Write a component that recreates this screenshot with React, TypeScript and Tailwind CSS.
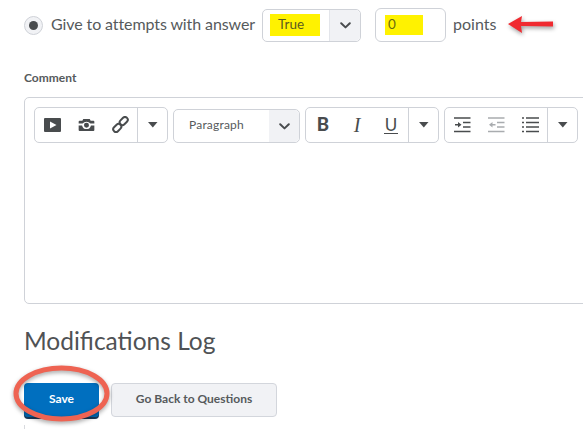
import { ReactNode } from 'react';

function Caret() {
  return (
    <svg width="10" height="6" viewBox="0 0 10 6">
      <path d="M0 0h9.500L4.800 5.500z" fill="#494c4e" />
    </svg>
  );
}

function Chevron() {
  return (
    <svg width="11" height="7" viewBox="0 0 11 7">
      <path d="M1.200 1.200 5.500 5.400 9.800 1.200" fill="none" stroke="#494c4e" strokeWidth="2" strokeLinecap="round" strokeLinejoin="round" />
    </svg>
  );
}

function ToolGroup({ children }: { children: ReactNode }) {
  return (
    <div className="flex h-[36px] w-[134px] shrink-0 items-stretch rounded-[5px] border border-[#cfd2d8] bg-white">
      <div className="grid flex-1 grid-cols-[34px_34px_34px] place-items-center pb-[1px]">{children}</div>
      <div className="flex flex-1 items-center justify-center border-l border-[#cfd2d8]">
        <Caret />
      </div>
    </div>
  );
}

function IndentIcon({ color, dir }: { color: string; dir: 'in' | 'out' }) {
  return (
    <svg width="17" height="16" viewBox="0 0 17 16">
      <path d="M0 1h16.500M9 5.500h7.500M9 10h7.500M0 14.500h16.500" stroke={color} strokeWidth="1.600" />
      {dir === 'in' ? (
        <path d="M1 7h3V5l3.500 2.800L4 10.500V8.500H1z" fill={color} />
      ) : (
        <path d="M7.500 7h-3V5L1 7.800l3.500 2.700V8.500h3z" fill={color} />
      )}
    </svg>
  );
}

export default function App() {
  return (
    <div className="relative h-[429px] w-[583px] overflow-hidden bg-white font-['Lato','Open_Sans',sans-serif] text-[#565a5c]">
      <div className="pl-[24px] pt-[8px]">
        {/* Answer row */}
        <div className="flex h-[34px] items-center">
          <div className="flex h-[19px] w-[19px] shrink-0 items-center justify-center rounded-full border border-[#cfd2d8] bg-[#f1f2f5]">
            <div className="h-[9px] w-[9px] rounded-full bg-[#494c4e]" />
          </div>
          <span className="ml-[8px] w-[211px] shrink-0 whitespace-nowrap pb-[2px] text-[16px] leading-none tracking-[-0.1px]">Give to attempts with answer</span>
          <div className="flex h-[33px] w-[99px] items-stretch rounded-[5px] border border-[#cfd2d8] bg-white">
            <div className="flex flex-1 items-center pl-[7px]">
              <span className="flex h-[22px] w-[50px] items-center bg-[#fff200] pb-[1px] pl-[8px] text-[13.500px] text-[#5b5a20]">True</span>
            </div>
            <div className="flex w-[31px] items-center justify-center rounded-r-[5px] border-l border-[#e3e5ea] bg-[#f1f2f5]">
              <Chevron />
            </div>
          </div>
          <div className="ml-[14px] flex h-[34px] w-[71px] items-center rounded-[6px] border border-[#cfd2d8] bg-white pl-[9px]">
            <span className="flex h-[20px] w-[38px] items-center bg-[#fff200] pb-[1px] pl-[3px] text-[13.500px] text-[#6b6a10]">0</span>
          </div>
          <span className="ml-[7px] pb-[2px] text-[16px] leading-none">points</span>
        </div>

        {/* Comment editor */}
        <div className="mt-[29px] h-[14px] text-[12px] font-bold leading-[14px] text-[#565a5c]">Comment</div>
        <div className="mt-[12px] h-[207px] w-[600px] rounded-[5px] border border-[#cfd2d8] bg-white">
          <div className="flex items-start gap-[5px] pl-[9px] pt-[9px]">
            <ToolGroup>
              <svg width="17" height="14" viewBox="0 0 17 14">
                <path fillRule="evenodd" d="M1 0h15a1 1 0 0 1 1 1v12a1 1 0 0 1-1 1H1a1 1 0 0 1-1-1V1a1 1 0 0 1 1-1zm5 3.500v7L12.500 7z" fill="#494c4e" />
              </svg>
              <svg width="17" height="12" viewBox="0 0 17 13">
                <path fillRule="evenodd" d="M5 0h7l1 2h3a1 1 0 0 1 1 1v2h-4.300a5.300 5.300 0 0 0-8.400 0H0V3a1 1 0 0 1 1-1h3zM0 7h3.700a4.900 4.900 0 0 0 9.600 0H17v5a1 1 0 0 1-1 1H1a1 1 0 0 1-1-1zm8.500-3a2.700 2.700 0 1 0 0 5.400 2.700 2.700 0 0 0 0-5.400z" fill="#494c4e" />
              </svg>
              <svg width="17" height="17" viewBox="0 0 17 17">
                <g fill="none" stroke="#494c4e" strokeWidth="2">
                  <rect x="9" y="0.500" width="5.500" height="9" rx="2.700" transform="rotate(45 11.700 5)" />
                  <rect x="2.500" y="7.500" width="5.500" height="9" rx="2.700" transform="rotate(45 5.300 12)" />
                </g>
              </svg>
            </ToolGroup>
            <div className="mt-[2px] flex h-[34px] w-[127px] shrink-0 items-stretch rounded-[5px] border border-[#cfd2d8] bg-white">
              <div className="flex flex-1 items-center pb-[3px] pl-[15px] text-[12px] tracking-[0.2px]">Paragraph</div>
              <div className="flex w-[30px] items-center justify-center rounded-r-[5px] bg-[#f1f2f5]">
                <Chevron />
              </div>
            </div>
            <ToolGroup>
              <span className="text-[18.500px] font-black leading-none text-[#494c4e]">B</span>
              <span className="font-['Liberation_Serif',serif] text-[20px] italic leading-none text-[#494c4e]">I</span>
              <span className="border-b-[1.500px] border-[#494c4e] px-px text-[17px] leading-[17px] text-[#494c4e]">U</span>
            </ToolGroup>
            <ToolGroup>
              <IndentIcon color="#494c4e" dir="in" />
              <IndentIcon color="#a9acaf" dir="out" />
              <svg width="17" height="16" viewBox="0 0 17 16">
                <path d="M4 1h13M4 5.500h13M4 10h13M4 14.500h13" stroke="#494c4e" strokeWidth="1.600" />
                <path d="M0 1h2M0 5.500h2M0 10h2M0 14.500h2" stroke="#494c4e" strokeWidth="1.600" />
              </svg>
            </ToolGroup>
            <div className="h-[36px] w-[30px] shrink-0 rounded-l-[5px] border border-[#cfd2d8]" />
          </div>
        </div>

        {/* Log */}
        <h2 className="mt-[19px] h-[36px] text-[24.500px] font-normal leading-[36px] text-[#4f5255]">Modifications Log</h2>

        <div className="mt-[24px] flex gap-[12px]">
          <button className="h-[34px] w-[75px] rounded-[4px] bg-[#006fbf] pb-[2px] text-[12px] font-bold text-white shadow-[0_2px_0_#1a3a5c]">Save</button>
          <button className="h-[34px] w-[166px] rounded-[4px] border border-[#d3d6dc] bg-[#f1f2f5] pb-[2px] text-[12px] font-bold text-[#565a5c]">Go Back to Questions</button>
        </div>
      </div>

      {/* Annotations drawn over the screenshot */}
      <svg className="absolute left-[506px] top-[12px] drop-shadow-[1px_2px_2px_rgba(0,0,0,0.4)]" width="54" height="26" viewBox="0 0 54 26">
        <path d="M2 12 16 4l-1 6 32-.500v5L15 14l1 7z" fill="#f02a30" />
      </svg>
      <svg className="absolute left-[10px] top-[362px] drop-shadow-[0_2px_2px_rgba(0,0,0,0.35)]" width="104" height="64" viewBox="0 0 104 64">
        <ellipse cx="51.500" cy="31.500" rx="45.500" ry="25.500" fill="none" stroke="#ee6352" strokeWidth="5" />
      </svg>
      <div className="absolute left-[24px] top-[425px] h-[4px] w-px bg-[#d8dade]" />
    </div>
  );
}
